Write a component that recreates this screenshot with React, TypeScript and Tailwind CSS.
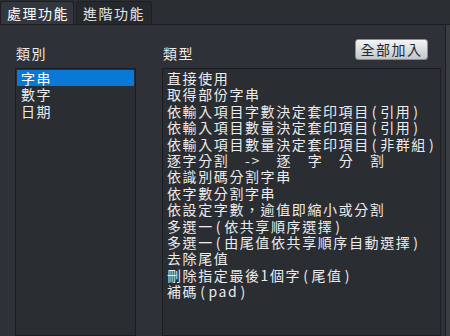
import React, { useState } from "react";

const categories = ["字串", "數字", "日期"];

const types = [
  "直接使用",
  "取得部份字串",
  "依輸入項目字數決定套印項目(引用)",
  "依輸入項目數量決定套印項目(引用)",
  "依輸入項目數量決定套印項目(非群組)",
  "逐字分割　->　逐　字　分　割",
  "依識別碼分割字串",
  "依字數分割字串",
  "依設定字數，逾值即縮小或分割",
  "多選一(依共享順序選擇)",
  "多選一(由尾值依共享順序自動選擇)",
  "去除尾值",
  "刪除指定最後1個字(尾值)",
  "補碼(pad)",
];

// parens in the original font are wider, pad them a bit
function Label({ text }: { text: string }) {
  const parts = text.split(/([()])/);
  return (
    <>
      {parts.map((p, i) =>
        p === "(" || p === ")" ? (
          <span key={i} className="px-[2px]">
            {p}
          </span>
        ) : (
          <React.Fragment key={i}>{p}</React.Fragment>
        )
      )}
    </>
  );
}

export default function App() {
  const [tab, setTab] = useState(0);
  const [cat, setCat] = useState(0);

  return (
    <div
      className="w-[450px] h-[336px] overflow-hidden bg-[#2b2e33] text-[#ececec] flex flex-col"
      style={{ fontFamily: '"Noto Sans CJK TC", "Noto Sans CJK SC", sans-serif' }}
    >
      {/* tabs */}
      <div className="flex items-end h-[25px] gap-[2px] shrink-0 border-b border-[#1d1f23]">
        {["處理功能", "進階功能"].map((t, i) => (
          <button
            key={t}
            onClick={() => setTab(i)}
            className={
              i === tab
                ? "h-[23px] w-[74px] pl-[2px] rounded-t-[3px] bg-[#34373d] border border-b-0 border-[#1d1f23] text-[14px] leading-[22px] tracking-[1.5px] text-white"
                : "h-[23px] w-[76px] rounded-t-[3px] bg-[#25282c] border border-b-0 border-[#1d1f23] text-[14px] leading-[22px] tracking-[1.5px] text-[#e4e4e4]"
            }
          >
            {t}
          </button>
        ))}
      </div>

      {/* body */}
      <div className="flex flex-1 min-h-0">
        <div className="flex flex-1 min-h-0 bg-[#2e3137] pl-[15px] pr-[4px] pt-[8px] gap-[26px]">
          {/* categories */}
          <div className="flex flex-col w-[121px] min-h-0">
            <div className="h-[35px] flex items-end pb-[7px] pl-[1px] text-[14px] leading-[16px] tracking-[1.5px]">
              類別
            </div>
            <div className="flex-1 bg-[#2a2d32] border border-[#1b1d21] p-[1px]">
              {categories.map((c, i) => (
                <div
                  key={c}
                  onClick={() => setCat(i)}
                  className={
                    i === cat
                      ? "h-[16.4px] leading-[16.4px] pl-[4px] text-[14px] tracking-[1.5px] bg-[#0a78d6] text-white"
                      : "h-[16.4px] leading-[16.4px] pl-[4px] text-[14px] tracking-[1.5px]"
                  }
                >
                  {c}
                </div>
              ))}
            </div>
          </div>

          {/* types */}
          <div className="flex flex-col flex-1 min-h-0">
            <div className="h-[35px] flex items-end justify-between">
              <span className="pb-[7px] pl-[1px] text-[14px] leading-[16px] tracking-[1.5px]">類型</span>
              <button className="mb-[8px] mr-[13px] h-[21px] w-[73px] rounded-[3px] border border-[#8a8d92] bg-gradient-to-b from-[#f4f4f4] to-[#c4c6c9] text-[14px] leading-[19px] tracking-[1.5px] text-[#1c2a3a]">
                全部加入
              </button>
            </div>
            <div className="flex-1 bg-[#2a2d32] border border-[#1b1d21] p-[1px] pl-[4px]">
              {types.map((t) => (
                <div
                  key={t}
                  className="h-[16.4px] leading-[16.4px] text-[14px] tracking-[1.6px] whitespace-pre"
                >
                  <Label text={t} />
                </div>
              ))}
            </div>
          </div>
        </div>
        <div className="w-[5px] bg-[#3a3d42] border-l border-[#1d1f23]" />
      </div>
    </div>
  );
}
